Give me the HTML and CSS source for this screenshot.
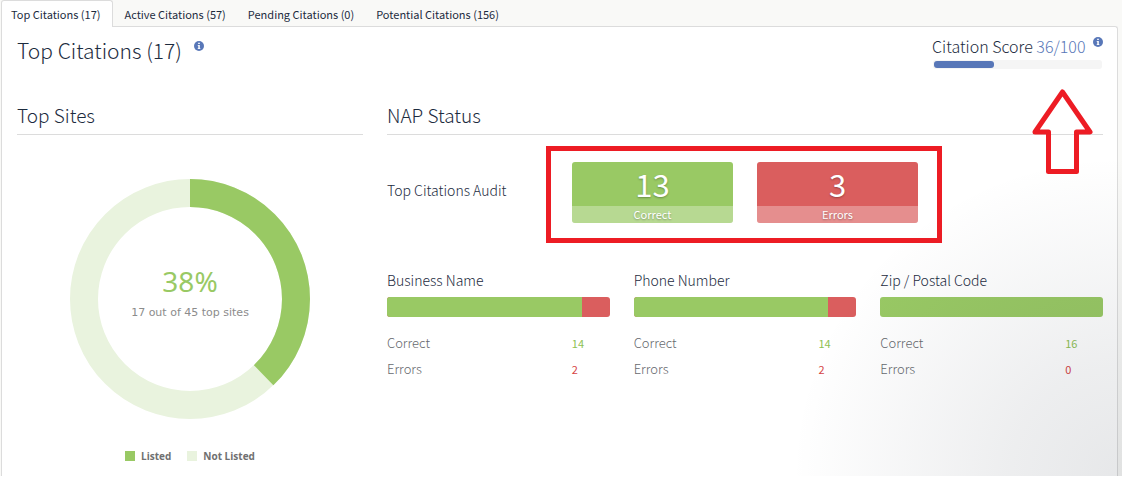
FILE: index.html
```html
<!DOCTYPE html>
<html lang="en">
<head>
<meta charset="utf-8">
<title>Top Citations</title>
<link rel="stylesheet" href="styles.css">
</head>
<body>
<svg class="defs" aria-hidden="true">
  <symbol id="info" viewBox="0 0 10 10">
    <circle cx="5" cy="5" r="5" fill="#5877b8"/>
    <path d="M4.2 1.7h1.6v1.4H4.2zM3.7 4h2.1v3.2h.6V8H3.7v-.8h.6V4.8h-.6z" fill="#fff"/>
  </symbol>
</svg>
<div class="page">
  <nav class="tabs">
    <a class="tab active" href="#top" aria-current="page">Top Citations (17)</a>
    <a class="tab" href="#active">Active Citations (57)</a>
    <a class="tab" href="#pending">Pending Citations (0)</a>
    <a class="tab" href="#potential">Potential Citations (156)</a>
  </nav>
  <main class="panel">
    <header class="head">
      <h1 class="title">Top Citations (17) <svg class="info"><use href="#info"/></svg></h1>
      <div class="score">
        <p class="score-text">Citation Score <span class="blue">36/100</span><svg class="info"><use href="#info"/></svg></p>
        <div class="meter" role="progressbar" aria-label="Citation Score" aria-valuenow="36" aria-valuemin="0" aria-valuemax="100"><div class="meter-fill" style="width:36%"></div></div>
        <svg class="arrow" viewBox="0 0 62 86" aria-hidden="true"><path d="M30.5 3 58 43H44.500V82.500H16.500V43H3z" fill="none" stroke="#ed1c24" stroke-width="5" stroke-linejoin="round"/></svg>
      </div>
    </header>
    <div class="columns">
      <section class="sites">
        <h2 class="section-title">Top Sites</h2>
        <div class="donut">
          <svg class="ring" viewBox="0 0 240 240" aria-hidden="true">
            <circle cx="120" cy="120" r="106" fill="none" stroke="#e9f3de" stroke-width="28"/>
            <circle cx="120" cy="120" r="106" fill="none" stroke="#99c964" stroke-width="28" pathLength="45" stroke-dasharray="17 28" transform="rotate(-90 120 120)"/>
          </svg>
          <div class="donut-text">
            <p class="percent">38%</p>
            <p class="detail">17 out of 45 top sites</p>
          </div>
        </div>
        <ul class="legend">
          <li class="key"><span class="swatch listed"></span>Listed</li>
          <li class="key"><span class="swatch"></span>Not Listed</li>
        </ul>
      </section>
      <section class="nap">
        <h2 class="section-title">NAP Status</h2>
        <div class="audit">
          <h3 class="label">Top Citations Audit</h3>
          <div class="boxes">
            <div class="box good"><p class="num">13</p><p class="cap">Correct</p></div>
            <div class="box bad"><p class="num">3</p><p class="cap">Errors</p></div>
          </div>
        </div>
        <div class="fields">
          <div class="field">
            <h3 class="label">Business Name</h3>
            <div class="bar"><div class="bar-fill" style="width:87.5%"></div></div>
            <table class="counts"><tr><th scope="row">Correct</th><td class="green">14</td></tr><tr><th scope="row">Errors</th><td class="red">2</td></tr></table>
          </div>
          <div class="field">
            <h3 class="label">Phone Number</h3>
            <div class="bar"><div class="bar-fill" style="width:87.5%"></div></div>
            <table class="counts"><tr><th scope="row">Correct</th><td class="green">14</td></tr><tr><th scope="row">Errors</th><td class="red">2</td></tr></table>
          </div>
          <div class="field">
            <h3 class="label">Zip / Postal Code</h3>
            <div class="bar"><div class="bar-fill" style="width:100%"></div></div>
            <table class="counts"><tr><th scope="row">Correct</th><td class="green">16</td></tr><tr><th scope="row">Errors</th><td class="red">0</td></tr></table>
          </div>
        </div>
      </section>
    </div>
  </main>
</div>
</body>
</html>
```
FILE: styles.css
```css
* { box-sizing: border-box; }
body { margin: 0; background: #fff; color: #1c2b3e; font-family: "Noto Sans CJK SC", "Noto Sans", sans-serif; font-size: 11px; }
h1, h2, h3, p, ul { margin: 0; padding: 0; font-weight: 300; }
.defs { position: absolute; width: 0; height: 0; }
.page { position: relative; margin-right: 3px; padding: 0 4px 0 1px; background: #f9f9f7; }
.page::after { content: ""; position: absolute; inset: 0; pointer-events: none; background: radial-gradient(ellipse 330px 320px at 100% 100%, rgba(30, 40, 55, .11), rgba(30, 40, 55, .08) 35%, rgba(30, 40, 55, 0)); }
.tabs { display: flex; height: 26px; }
.tab { padding: 0 10px; border: 1px solid transparent; border-bottom: 0; line-height: 26px; color: #1c2b3e; text-decoration: none; white-space: nowrap; }
.tab.active { height: 27px; padding: 0 12px 0 9px; background: #fff; border-color: #dcdcdc; border-radius: 3px 3px 0 0; z-index: 1; }
.panel { padding: 9px 14px 12px 15px; background: #fff; border: 1px solid #dcdcdc; border-bottom: 0; border-top-right-radius: 3px; }
.head { display: flex; justify-content: space-between; height: 64px; }
.title { font-size: 21px; line-height: 28px; }
.info { width: 10px; height: 10px; vertical-align: top; }
.title .info { margin: 5px 0 0 7px; }
.score { position: relative; width: 171px; }
.score-text { font-size: 16px; line-height: 20px; white-space: nowrap; }
.score-text .info { margin: 1px 0 0 8px; }
.blue { color: #5877b8; }
.meter { height: 9px; margin: 4px 1px 0; padding: 1px; border-radius: 3px; background: #f5f5f5; }
.meter-fill { height: 7px; border-radius: 3px; background: #5877b8; }
.arrow { position: absolute; right: 9px; top: 53px; width: 62px; height: 86px; z-index: 1; }
.columns { display: grid; grid-template-columns: 346fr 716fr; gap: 24px; }
.section-title { height: 35px; border-bottom: 1px solid #dcdcdc; font-size: 19px; line-height: 30px; }
.donut { display: grid; width: 240px; margin: 44px auto 0; }
.ring { grid-area: 1 / 1; width: 100%; }
.donut-text { grid-area: 1 / 1; padding-top: 84px; text-align: center; font-family: "Noto Sans", sans-serif; }
.percent { color: #99c964; font-size: 28px; line-height: 36px; font-weight: 400; }
.detail { color: #8c8c8c; font-family: "DejaVu Sans", sans-serif; font-size: 11px; line-height: 28px; font-weight: 400; }
.legend { display: flex; justify-content: center; gap: 16px; margin-top: 29px; list-style: none; font: 700 10px/16px "Open Sans", sans-serif; color: #707070; }
.key { display: flex; align-items: center; gap: 6px; }
.swatch { width: 10px; height: 10px; background: #e9f3de; }
.listed { background: #99c964; }
.audit { display: grid; grid-template-columns: repeat(4, 1fr); gap: 24px; margin-top: 27px; }
.audit > .label { padding-top: 18px; }
.boxes { position: relative; grid-column: 2 / 4; display: grid; grid-template-columns: 1fr 1fr; gap: 24px; }
.boxes::after { content: ""; position: absolute; inset: -16px -24px -20px -26px; border: 5px solid #ed1c24; }
.label { font-size: 14px; line-height: 20px; white-space: nowrap; }
.box { overflow: hidden; border-radius: 3px; color: #fff; text-align: center; text-shadow: 0 1px 2px rgba(0, 0, 0, .3); }
.good { background: #99c964; }
.bad { background: #da5e5e; }
.num { font-size: 31px; line-height: 44px; font-weight: 400; }
.cap { font-size: 11px; line-height: 17px; font-weight: 400; background: rgba(255, 255, 255, .3); }
.fields { display: grid; grid-template-columns: repeat(3, 1fr); gap: 24px; margin-top: 47px; }
.bar { height: 20px; margin: 7px 0 13px; overflow: hidden; border-radius: 3px; background: #da5e5e; }
.bar-fill { height: 100%; background: #99c964; }
.counts { width: 100%; table-layout: fixed; border-collapse: collapse; line-height: 26px; }
.counts th { padding: 0; text-align: left; font-weight: 300; color: #66696e; font-size: 13px; }
.counts td { width: 17%; padding: 0; font-size: 11px; }
.green { color: #8dc153; }
.red { color: #d64545; }
```
